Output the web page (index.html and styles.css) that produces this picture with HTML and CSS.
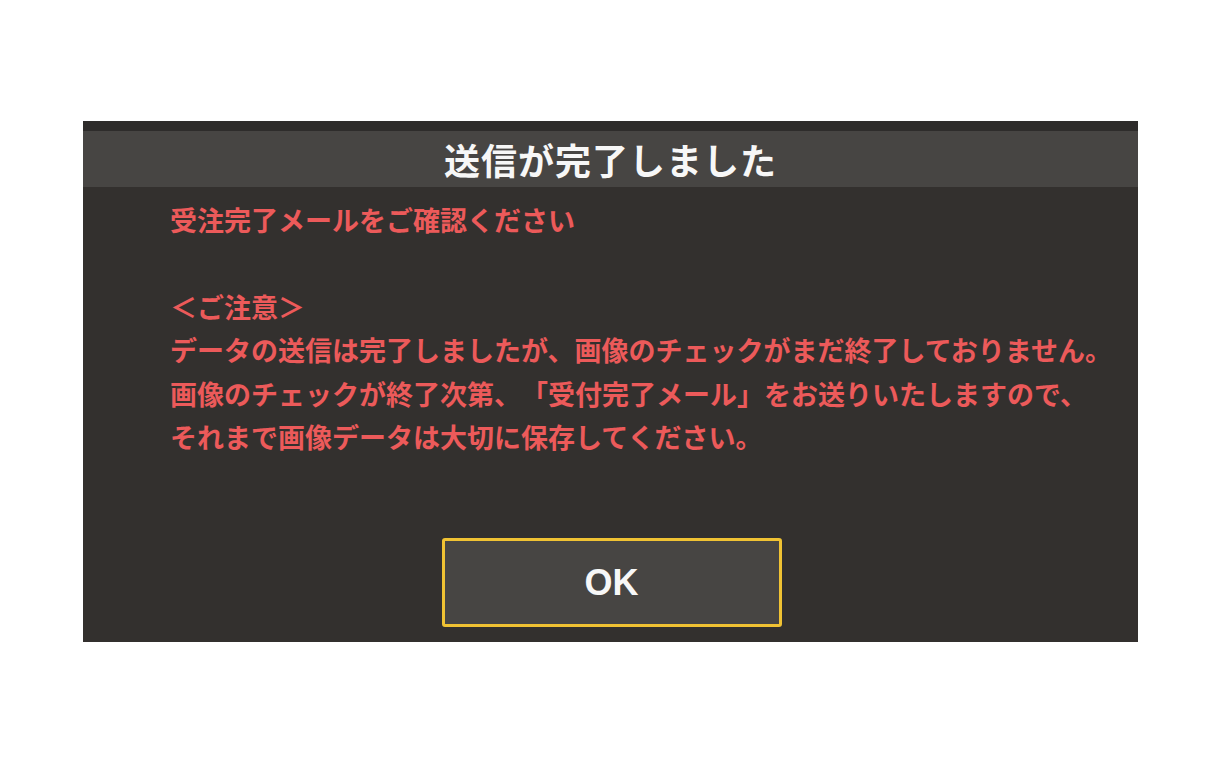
FILE: index.html
```html
<!DOCTYPE html>
<html>
<head>
    <meta charset="UTF-8">
    <title>送信が完了しました</title>
    <link rel="stylesheet" href="styles.css">
</head>
<body>
    <!-- 送信完了ダイアログ -->
    <div class="dialog">
        <div class="dialog-top"></div>
        <div class="dialog-header">送信が完了しました</div>
        <div class="dialog-body">
            <p class="message">受注完了メールをご確認ください<br>
            <br>
            ＜ご注意＞<br>
            データの送信は完了しましたが、画像のチェックがまだ終了しておりません。<br>
            画像のチェックが終了次第、「受付完了メール」をお送りいたしますので、<br>
            それまで画像データは大切に保存してください。</p>
            <div class="actions">
                <button class="ok-btn" type="button">OK</button>
            </div>
        </div>
    </div>
</body>
</html>
```

FILE: styles.css
```css
body {
    margin: 0;
    background-color: #fff;
    font-family: "Noto Sans CJK JP", "Liberation Sans", sans-serif;
}

.dialog {
    width: 1055px;
    height: 521px;
    margin: 121px 0 0 83px;
    background-color: #33302e;
    display: flex;
    flex-direction: column;
}

.dialog-top {
    height: 10px;
    background-color: #2e2c2b;
}

.dialog-header {
    height: 56px;
    background-color: #474543;
    color: #f7f7f7;
    font-size: 36px;
    font-weight: bold;
    line-height: 56px;
    text-align: center;
    letter-spacing: 1px;
}

.dialog-body {
    flex: 1;
    display: flex;
    flex-direction: column;
    padding: 11px 0 15px 87px;
}

.message {
    margin: 0;
    color: #ec5a5a;
    font-size: 27px;
    font-weight: bold;
    line-height: 43.4px;
    white-space: nowrap;
    text-spacing-trim: space-all;
}

.actions {
    margin-top: auto;
    display: flex;
    justify-content: center;
    padding-right: 85px;
}

.ok-btn {
    width: 340px;
    height: 89px;
    background-color: #474543;
    border: 3px solid #f0c233;
    border-radius: 3px;
    color: #f7f7f7;
    font-family: "Liberation Sans", Arial, sans-serif;
    font-size: 36px;
    font-weight: bold;
    cursor: pointer;
}
```
